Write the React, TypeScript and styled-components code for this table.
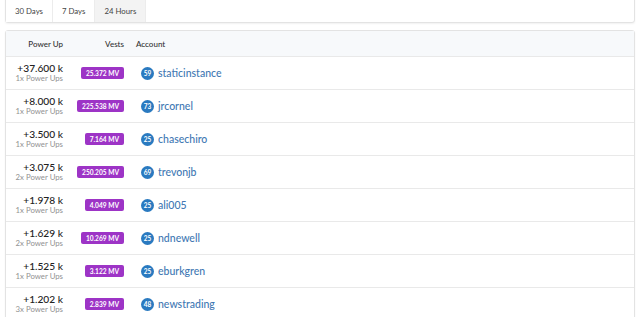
import React from "react";
import styled, { createGlobalStyle } from "styled-components";

const Global = createGlobalStyle`
  html, body { margin: 0; padding: 0; background: #fff; }
  body { font-family: Lato, "Open Sans", sans-serif; color: #333; }
`;

const Page = styled.div`
  padding: 0 5px;
  display: flex;
  flex-direction: column;
  gap: 7px;
  margin-top: -2px;
`;

const TabCard = styled.div`
  display: flex;
  background: #fff;
  border: 1px solid #e3e3e3;
  border-radius: 0 0 3px 3px;
  box-shadow: 0 1px 2px rgba(0,0,0,0.06);
  height: 23px;
`;

const Tab = styled.div<{ $active?: boolean }>`
  display: flex;
  align-items: center;
  padding: 0 9px;
  font-size: 7.8px;
  color: #444;
  border-right: 1px solid #ececec;
  background: ${(p) => (p.$active ? "#f3f3f3" : "#fff")};
`;

const TableCard = styled.div`
  border: 1px solid #e3e3e3;
  border-radius: 3px;
  box-shadow: 0 1px 2px rgba(0,0,0,0.06);
  background: #fff;
`;

const Row = styled.div<{ $head?: boolean }>`
  display: grid;
  grid-template-columns: 57px 61px 1fr;
  align-items: center;
  height: ${(p) => (p.$head ? "25px" : "32px")};
  background: ${(p) => (p.$head ? "#f7f9fb" : "#fff")};
  border-bottom: 1px solid #e9e9e9;
`;

const HeadCell = styled.div<{ $right?: boolean; $pad?: number }>`
  font-size: 8px;
  font-weight: 500;
  color: #333;
  text-align: ${(p) => (p.$right ? "right" : "left")};
  padding-left: ${(p) => p.$pad ?? 0}px;
`;

const PowerCell = styled.div`
  display: flex;
  flex-direction: column;
  align-items: flex-end;
  line-height: 1;
`;

const Amount = styled.span`
  font-size: 10.2px;
  font-weight: 500;
  color: #222;
`;

const Sub = styled.span`
  font-size: 7.8px;
  color: #929292;
  margin-top: 2px;
`;

const VestCell = styled.div`
  display: flex;
  justify-content: flex-end;
`;

const Badge = styled.span`
  background: #9d34c6;
  color: #fff;
  font-size: 6.6px;
  font-weight: 700;
  padding: 0 5px;
  height: 12px;
  display: inline-flex;
  align-items: center;
  border-radius: 2px;
`;

const Account = styled.div`
  display: flex;
  align-items: center;
  gap: 4px;
  padding-left: 17px;
`;

const Rep = styled.span`
  width: 13px;
  height: 13px;
  border-radius: 50%;
  background: #2a7ac0;
  color: #fff;
  font-size: 6.5px;
  font-weight: 700;
  display: inline-flex;
  align-items: center;
  justify-content: center;
`;

const Name = styled.span`
  font-size: 10.5px;
  color: #4178b3;
  font-weight: 500;
`;

const rows = [
  ["+37.600 k", "1x Power Ups", "25.372 MV", "59", "staticinstance"],
  ["+8.000 k", "1x Power Ups", "225.538 MV", "73", "jrcornel"],
  ["+3.500 k", "1x Power Ups", "7.164 MV", "25", "chasechiro"],
  ["+3.075 k", "2x Power Ups", "250.205 MV", "69", "trevonjb"],
  ["+1.978 k", "1x Power Ups", "4.049 MV", "25", "ali005"],
  ["+1.629 k", "2x Power Ups", "10.269 MV", "25", "ndnewell"],
  ["+1.525 k", "1x Power Ups", "3.122 MV", "25", "eburkgren"],
  ["+1.202 k", "3x Power Ups", "2.839 MV", "48", "newstrading"],
];

export default function App() {
  return (
    <>
      <Global />
      <Page>
        <TabCard>
          <Tab>30 Days</Tab>
          <Tab>7 Days</Tab>
          <Tab $active>24 Hours</Tab>
        </TabCard>
        <TableCard>
          <Row $head>
            <HeadCell $right>Power Up</HeadCell>
            <HeadCell $right>Vests</HeadCell>
            <HeadCell $pad={12}>Account</HeadCell>
          </Row>
          {rows.map((r) => (
            <Row key={r[4]}>
              <PowerCell>
                <Amount>{r[0]}</Amount>
                <Sub>{r[1]}</Sub>
              </PowerCell>
              <VestCell>
                <Badge>{r[2]}</Badge>
              </VestCell>
              <Account>
                <Rep>{r[3]}</Rep>
                <Name>{r[4]}</Name>
              </Account>
            </Row>
          ))}
        </TableCard>
      </Page>
    </>
  );
}
